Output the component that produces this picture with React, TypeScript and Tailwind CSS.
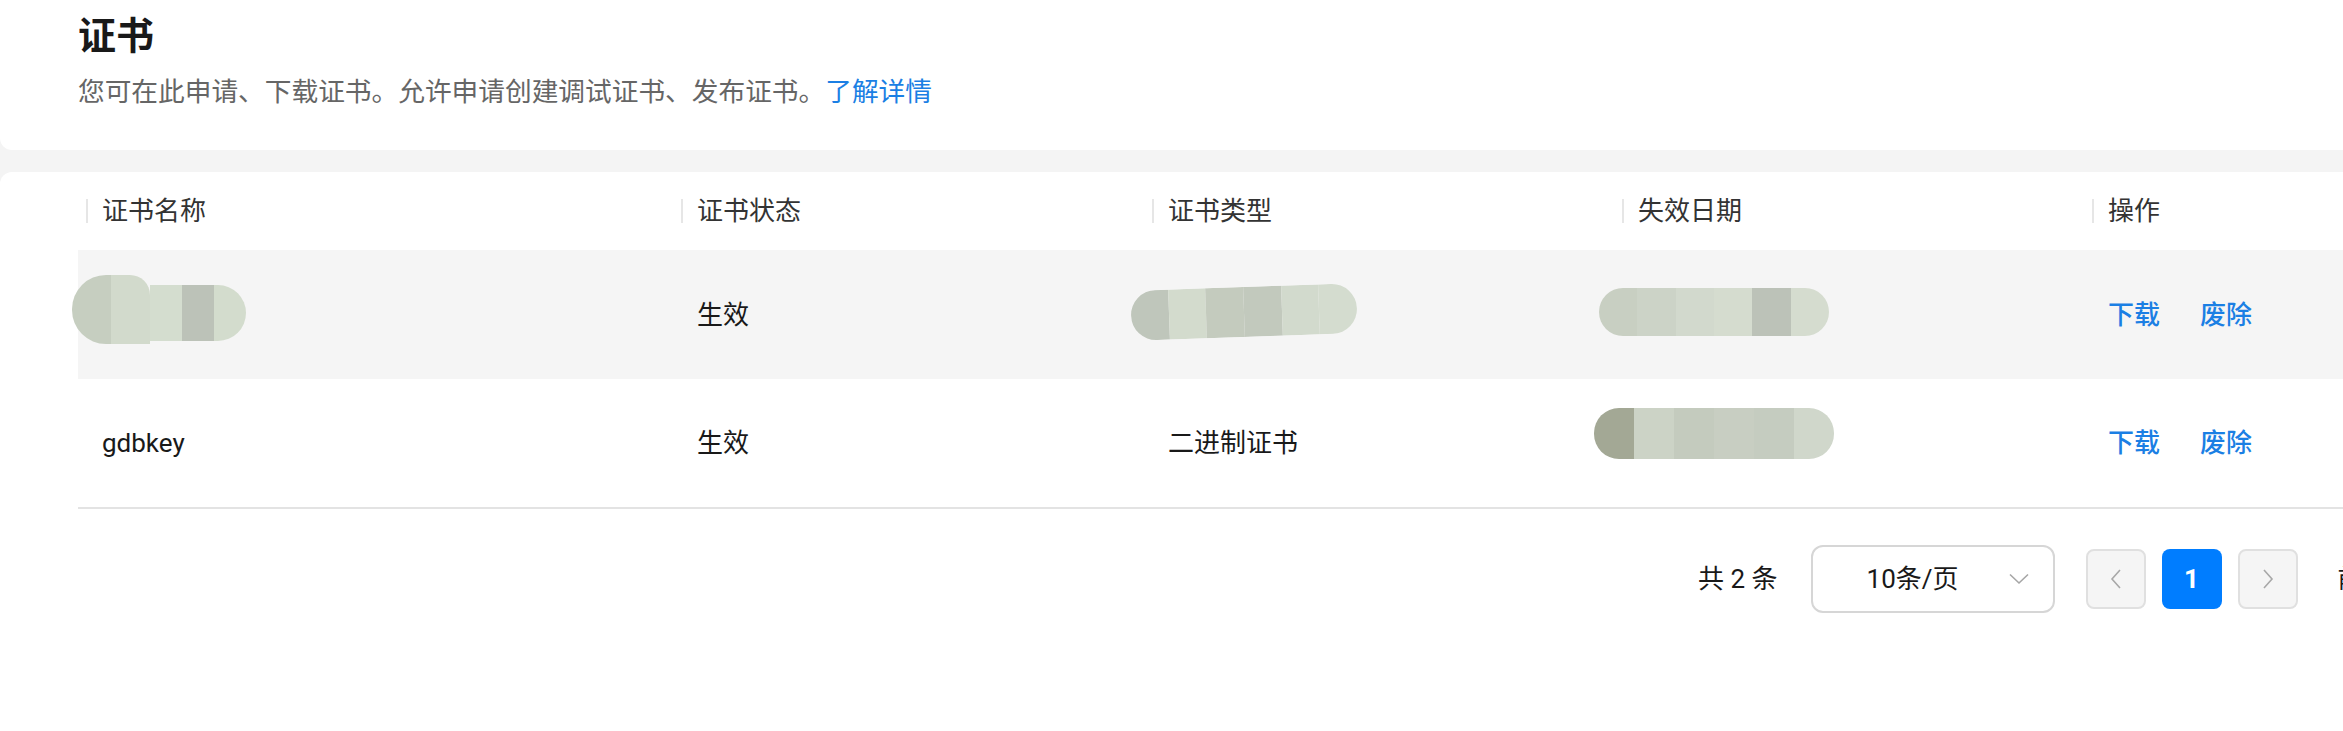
import React from "react";

const font = { fontFamily: 'Roboto, "Noto Sans CJK SC", sans-serif' };

type BlobProps = { cells: string[]; className: string };

function Smudge({ cells, className }: BlobProps) {
  return (
    <div className={`flex shrink-0 overflow-hidden ${className}`}>
      {cells.map((c, i) => (
        <div key={i} className="h-full flex-1" style={{ backgroundColor: c }} />
      ))}
    </div>
  );
}

function HeaderCell({ label }: { label: string }) {
  return (
    <div className="flex items-center pl-2">
      <span className="h-6 w-[2px] bg-[#e6e6e6]" />
      <span className="pl-[14px] text-[26px] leading-9 text-[#333333]">{label}</span>
    </div>
  );
}

function Actions() {
  return (
    <div className="flex items-center gap-[40px] pl-6 text-[26px] font-medium leading-9 text-[#1b7fe4]">
      <span>下载</span>
      <span>废除</span>
    </div>
  );
}

const cols = "grid grid-cols-[595px_471px_470px_470px_1fr]";

export default function App() {
  return (
    <div className="min-h-[731px] w-full overflow-hidden bg-[#f4f4f4]" style={font}>
      <div className="h-[150px] rounded-bl-[12px] bg-white pl-[78px] pt-[13px]">
        <h1 className="text-[38px] font-bold leading-[46px] text-[#191919]">证书</h1>
        <p className="mt-[15px] text-[26.7px] leading-9 text-[#666666]">
          您可在此申请、下载证书。允许申请创建调试证书、发布证书。
          <span className="text-[#1b7fe4]">了解详情</span>
        </p>
      </div>

      <div className="mt-[22px] h-[559px] rounded-tl-[12px] bg-white pl-[78px]">
        <div className={`${cols} h-[78px]`}>
          <HeaderCell label="证书名称" />
          <HeaderCell label="证书状态" />
          <HeaderCell label="证书类型" />
          <HeaderCell label="失效日期" />
          <HeaderCell label="操作" />
        </div>

        <div className={`${cols} h-[129px] bg-[#f5f5f5] text-[26px] leading-9 text-[#191919]`}>
          <div className="flex items-center">
            <div className="-ml-[6px] -mt-[11px] flex items-center">
              <Smudge
                className="h-[69px] w-[78px] rounded-l-[34px] rounded-tr-[20px]"
                cells={["#c6cec0", "#d2dacc"]}
              />
              <Smudge
                className="mt-[8px] h-[56px] w-[96px] rounded-r-[28px]"
                cells={["#d4ddcf", "#bcc2b8", "#d3dccd"]}
              />
            </div>
          </div>
          <div className="flex items-center pl-6">生效</div>
          <div className="flex items-center">
            <Smudge
              className="-ml-[13px] -mt-[6px] h-[50px] w-[226px] -rotate-[2deg] rounded-[25px]"
              cells={["#bfc6bb", "#d3dbcd", "#c4cbbe", "#c2c9bd", "#d2dacd", "#d4dccf"]}
            />
          </div>
          <div className="flex items-center">
            <Smudge
              className="-ml-[15px] -mt-[6px] h-[48px] w-[230px] rounded-[24px]"
              cells={["#c8cfc2", "#ccd3c7", "#d2d9cd", "#d5dccf", "#bcc2b8", "#d5dccf"]}
            />
          </div>
          <Actions />
        </div>

        <div className={`${cols} h-[130px] border-b-2 border-[#e3e3e3] text-[26px] leading-9 text-[#191919]`}>
          <div className="flex items-center pl-6">gdbkey</div>
          <div className="flex items-center pl-6">生效</div>
          <div className="flex items-center pl-6">二进制证书</div>
          <div className="flex items-center">
            <Smudge
              className="-ml-[20px] -mt-[20px] h-[51px] w-[240px] rounded-[25px]"
              cells={["#a3a895", "#ccd3c6", "#c4cbbe", "#c8cec2", "#c5ccc0", "#d0d7cb"]}
            />
          </div>
          <Actions />
        </div>

        <div className="mt-[36px] flex items-center whitespace-nowrap pl-[1620px] text-[26px] leading-9 text-[#191919]">
          <span className="shrink-0">共 2 条</span>
          <div className="ml-[33px] flex h-[68px] w-[244px] shrink-0 items-center rounded-[12px] border-2 border-[#d6d6d6] pl-[54px] pr-[24px]">
            <span className="flex-1">10条/页</span>
            <svg width="20" height="12" viewBox="0 0 20 12" fill="none">
              <path d="M1 1.5 L10 10 L19 1.5" stroke="#a6a6a6" strokeWidth="1.6" />
            </svg>
          </div>
          <div className="ml-[31px] flex h-[60px] w-[60px] shrink-0 items-center justify-center rounded-[8px] border-2 border-[#e0e0e0] bg-[#f5f5f5]">
            <svg width="12" height="22" viewBox="0 0 12 22" fill="none">
              <path d="M10 2 L2 11 L10 20" stroke="#a8a8a8" strokeWidth="1.6" />
            </svg>
          </div>
          <div className="ml-4 flex h-[60px] w-[60px] shrink-0 items-center justify-center rounded-[8px] bg-[#007dff] font-bold text-white">
            1
          </div>
          <div className="ml-4 flex h-[60px] w-[60px] shrink-0 items-center justify-center rounded-[8px] border-2 border-[#e0e0e0] bg-[#f5f5f5]">
            <svg width="12" height="22" viewBox="0 0 12 22" fill="none">
              <path d="M2 2 L10 11 L2 20" stroke="#a8a8a8" strokeWidth="1.6" />
            </svg>
          </div>
          <span className="ml-[40px] shrink-0">前往</span>
        </div>
      </div>
    </div>
  );
}
